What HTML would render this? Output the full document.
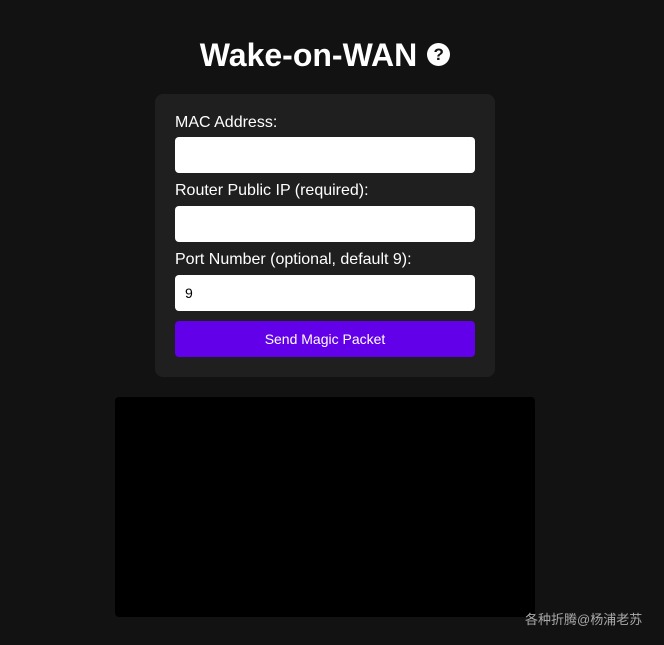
<!DOCTYPE html>
<html><head><meta charset="utf-8"><style>
*{box-sizing:border-box;margin:0;padding:0}
body{width:664px;height:645px;background:#121212;font-family:"Liberation Sans",Arial,sans-serif;color:#fff;position:relative;overflow:hidden}
h1{position:absolute;top:36px;left:-7px;width:664px;text-align:center;font-size:32px;font-weight:bold;line-height:38px}
.q{display:inline-block;width:23px;height:23px;border-radius:50%;background:#fff;color:#121212;font-size:17px;line-height:23px;text-align:center;vertical-align:6px;margin-left:10px}
.card{position:absolute;left:155px;top:94px;width:340px;height:283px;background:#1f1f1f;border-radius:8px}
.lab{position:absolute;left:20px;font-size:16px;line-height:18px}
.in{position:absolute;left:20px;width:300px;height:36px;background:#fff;border-radius:4px;color:#000;font-size:14px;padding-left:10px;line-height:36px}
.btn{position:absolute;left:20px;top:227px;width:300px;height:36px;background:#6200ea;border-radius:4px;text-align:center;font-size:14px;line-height:36px}
.box{position:absolute;left:115px;top:397px;width:420px;height:220px;background:#000;border-radius:4px}
.wm{position:absolute;left:525px;top:609px;font-size:13px;color:#aaa;font-family:"Liberation Sans","Noto Sans CJK SC",sans-serif}
</style></head><body>
<h1>Wake-on-WAN<span class="q">?</span></h1>
<div class="card">
<div class="lab" style="top:20px">MAC Address:</div>
<div class="in" style="top:43px"></div>
<div class="lab" style="top:88px">Router Public IP (required):</div>
<div class="in" style="top:112px"></div>
<div class="lab" style="top:157px">Port Number (optional, default 9):</div>
<div class="in" style="top:181px">9</div>
<div class="btn">Send Magic Packet</div>
</div>
<div class="box"></div>
<div class="wm">各种折腾@杨浦老苏</div>
</body></html>
